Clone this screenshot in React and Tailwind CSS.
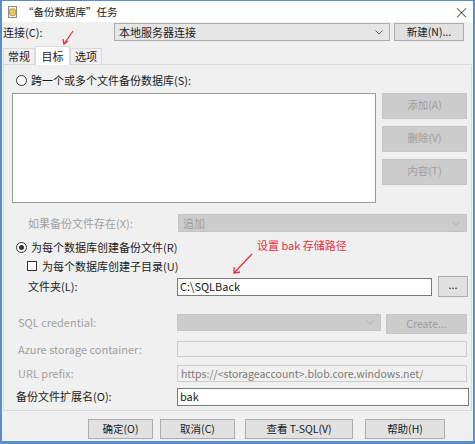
import React from "react";

const FONT = { fontFamily: '"Microsoft YaHei UI", "Noto Sans CJK SC", "Noto Sans", sans-serif' };

const Btn = ({ children, className = "", disabled = false }) => (
  <div
    className={`flex items-center justify-center border text-[10.5px] ${
      disabled ? "bg-[#cccccc] border-[#c4c4c4] text-[#9e9e9e]" : "bg-[#e1e1e1] border-[#adadad] text-[#1a1a1a]"
    } ${className}`}
  >
    {children}
  </div>
);

const Chevron = ({ color = "#606060" }) => (
  <svg width="8" height="5" viewBox="0 0 8 5">
    <path d="M0.5 0.5 L4 4 L7.5 0.5" fill="none" stroke={color} strokeWidth="1" />
  </svg>
);

const TitleIcon = () => (
  <svg width="11" height="12" viewBox="0 0 11 12">
    <rect x="1.5" y="0.5" width="8" height="11" fill="#f4f4f4" stroke="#8a8a8a" />
    <ellipse cx="5.5" cy="4" rx="3" ry="1.2" fill="#e8c85a" stroke="#9a8030" strokeWidth="0.6" />
    <path d="M2.5 4 V8.5 A3 1.2 0 0 0 8.5 8.5 V4" fill="#e8c85a" stroke="#9a8030" strokeWidth="0.6" />
  </svg>
);

export default function App() {
  return (
    <div
      className="relative w-[475px] h-[444px] bg-[#f0f0f0] border-x-2 border-b-[3px] border-t border-[#5b8dcc] flex flex-col text-[11px] text-[#1a1a1a] overflow-hidden"
      style={FONT}
    >
      {/* title bar */}
      <div className="h-[21px] bg-white flex items-center pl-[5px] pr-[4px]">
        <TitleIcon />
        <span className="ml-[5px] text-[10.5px]">“备份数据库”任务</span>
        <span className="ml-auto text-[15px] leading-none font-light text-[#333]">×</span>
      </div>

      {/* connection row */}
      <div className="mt-[1px] h-[18px] flex items-center">
        <span className="pl-[1px] w-[112px]">连接(C):</span>
        <div className="w-[276px] h-[18px] bg-[#e6e6e6] border border-[#acacac] flex items-center pl-[4px] pr-[6px]">
          <span>本地服务器连接</span>
          <span className="ml-auto">
            <Chevron />
          </span>
        </div>
        <Btn className="ml-[4px] w-[70px] h-[18px]">新建(N)...</Btn>
      </div>

      {/* tabs */}
      <div className="mt-[4px] h-[19px] flex items-end pl-[1px]">
        <div className="w-[32px] h-[16px] border border-b-0 border-[#d9d9d9] flex items-center justify-center">常规</div>
        <div className="w-[35px] h-[19px] bg-white border border-b-0 border-[#d9d9d9] flex items-center justify-center -mb-px relative">
          目标
        </div>
        <div className="w-[32px] h-[16px] border border-b-0 border-[#d9d9d9] flex items-center justify-center">选项</div>
      </div>

      {/* tab panel */}
      <div className="ml-[1px] mr-[1px] h-[347px] border border-[#d9d9d9] flex flex-col">
        {/* radio 1 */}
        <div className="mt-[7px] h-[16px] flex items-center pl-[12px]">
          <div className="w-[11px] h-[11px] rounded-full border border-[#333] bg-white" />
          <span className="ml-[4px]">跨一个或多个文件备份数据库(S):</span>
        </div>

        {/* list + buttons */}
        <div className="mt-[5px] h-[110px] flex pl-[8px]">
          <div className="w-[364px] h-[110px] bg-white border border-[#9a9a9a]" />
          <div className="ml-[6px] flex flex-col gap-[7px]">
            <Btn disabled className="w-[85px] h-[26px] items-start pt-[3px]">添加(A)</Btn>
            <Btn disabled className="w-[85px] h-[26px] items-start pt-[3px]">删除(V)</Btn>
            <Btn disabled className="w-[85px] h-[26px] items-start pt-[3px]">内容(T)</Btn>
          </div>
        </div>

        {/* if exists */}
        <div className="mt-[11px] h-[18px] flex items-center">
          <span className="pl-[24px] w-[174px] text-[#a0a0a0]">如果备份文件存在(X):</span>
          <div className="w-[289px] h-[18px] bg-[#cccccc] border border-[#c4c4c4] flex items-center pl-[4px] pr-[6px] text-[#a0a0a0]">
            <span>追加</span>
            <span className="ml-auto">
              <Chevron color="#b0b0b0" />
            </span>
          </div>
        </div>

        {/* radio 2 */}
        <div className="mt-[7px] h-[16px] flex items-center pl-[12px]">
          <div className="w-[11px] h-[11px] rounded-full border border-[#333] bg-white flex items-center justify-center">
            <div className="w-[5px] h-[5px] rounded-full bg-[#333]" />
          </div>
          <span className="ml-[4px]">为每个数据库创建备份文件(R)</span>
        </div>

        {/* checkbox */}
        <div className="mt-[3px] h-[16px] flex items-center pl-[23px]">
          <div className="w-[10px] h-[10px] border border-[#333] bg-white" />
          <span className="ml-[5px]">为每个数据库创建子目录(U)</span>
        </div>

        {/* folder */}
        <div className="mt-[2px] h-[21px] flex items-center">
          <span className="pl-[24px] w-[173px]">文件夹(L):</span>
          <div className="w-[255px] h-[18px] bg-white border border-[#7a7a7a] flex items-center pl-[2px]">C:\SQLBack</div>
          <Btn className="ml-[6px] w-[30px] h-[21px] pb-[4px]">...</Btn>
        </div>

        {/* sql credential */}
        <div className="mt-[17px] h-[20px] flex items-start">
          <span className="pl-[14px] w-[173px] h-[17px] flex items-center text-[#a0a0a0]">SQL credential:</span>
          <div className="w-[204px] h-[17px] bg-[#cccccc] border border-[#c4c4c4] flex items-center justify-end pr-[6px]">
            <Chevron color="#b0b0b0" />
          </div>
          <Btn disabled className="ml-[5px] w-[81px] h-[20px]">Create...</Btn>
        </div>

        {/* azure */}
        <div className="mt-[7px] h-[16px] flex items-center">
          <span className="pl-[14px] w-[173px] text-[#a0a0a0]">Azure storage container:</span>
          <div className="w-[290px] h-[16px] bg-[#f0f0f0] border border-[#cccccc]" />
        </div>

        {/* url prefix */}
        <div className="mt-[8px] h-[17px] flex items-center">
          <span className="pl-[14px] w-[173px] text-[#a0a0a0]">URL prefix:</span>
          <div className="w-[290px] h-[17px] bg-[#f0f0f0] border border-[#cccccc] flex items-center pl-[3px] text-[#7a7a7a] text-[10.5px]">
            https://&lt;storageaccount&gt;.blob.core.windows.net/
          </div>
        </div>

        {/* extension */}
        <div className="mt-[6px] h-[17px] flex items-center">
          <span className="pl-[12px] w-[173px]">备份文件扩展名(O):</span>
          <div className="w-[292px] h-[18px] bg-white border border-[#7a7a7a] flex items-center pl-[2px]">bak</div>
        </div>
      </div>

      {/* bottom buttons */}
      <div className="mt-[8px] h-[20px] flex pl-[86px]">
        <Btn className="w-[65px] h-[20px]">确定(O)</Btn>
        <Btn className="ml-[7px] w-[75px] h-[20px]">取消(C)</Btn>
        <Btn className="ml-[10px] w-[108px] h-[20px]">查看 T-SQL(V)</Btn>
        <Btn className="ml-[12px] w-[80px] h-[20px]">帮助(H)</Btn>
      </div>

      {/* annotation */}
      <span className="absolute left-[255px] top-[236px] text-[11px] text-[#e8303a]">设置 bak 存储路径</span>

      {/* red arrows */}
      <svg className="absolute left-0 top-0 pointer-events-none" width="475" height="444">
        <g stroke="#e8303a" strokeWidth="1.3" fill="none">
          <path d="M71 30 L62 43" />
          <path d="M61 38 L62 43 L66 40" />
          <path d="M250 253 L232 272" />
          <path d="M232 266 L232 272 L238 271" />
        </g>
      </svg>
    </div>
  );
}
